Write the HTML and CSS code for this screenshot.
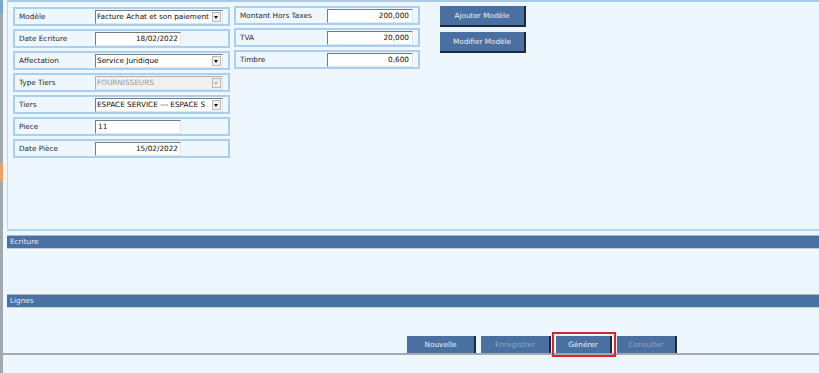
FILE: index.html
```html
<!DOCTYPE html>
<html>
<head>
    <title>Saisie Modèle</title>
    <link rel="stylesheet" href="styles.css">
</head>

<body>
    <div class="edge">
        <div class="edge-top"></div>
        <div class="edge-mark"></div>
    </div>

    <div class="page">
        <div class="panel">
            <div class="col col-left">
                <div class="field">
                    <span class="label">Modèle</span>
                    <div class="select">Facture Achat et son paiement<span class="arrow"></span></div>
                </div>
                <div class="field">
                    <span class="label">Date Ecriture</span>
                    <div class="input input-date">18/02/2022</div>
                </div>
                <div class="field">
                    <span class="label">Affectation</span>
                    <div class="select">Service Juridique<span class="arrow"></span></div>
                </div>
                <div class="field">
                    <span class="label">Type Tiers</span>
                    <div class="select disabled">FOURNISSEURS<span class="arrow"></span></div>
                </div>
                <div class="field">
                    <span class="label">Tiers</span>
                    <div class="select">ESPACE SERVICE --- ESPACE S<span class="arrow"></span></div>
                </div>
                <div class="field">
                    <span class="label">Piece</span>
                    <div class="input input-date left">11</div>
                </div>
                <div class="field">
                    <span class="label">Date Pièce</span>
                    <div class="input input-date">15/02/2022</div>
                </div>
            </div>

            <div class="col col-mid">
                <div class="field">
                    <span class="label">Montant Hors Taxes</span>
                    <div class="input input-num">200,000</div>
                </div>
                <div class="field">
                    <span class="label">TVA</span>
                    <div class="input input-num">20,000</div>
                </div>
                <div class="field">
                    <span class="label">Timbre</span>
                    <div class="input input-num">0,600</div>
                </div>
            </div>

            <div class="col col-actions">
                <button class="btn btn-model">Ajouter Modèle</button>
                <button class="btn btn-model">Modifier Modèle</button>
            </div>
        </div>

        <div class="section-bar">Ecriture</div>
        <div class="section-body"></div>
        <div class="section-bar">Lignes</div>

        <div class="toolbar">
            <button class="btn btn-bar btn-new">Nouvelle</button>
            <button class="btn btn-bar off btn-save">Enregistrer</button>
            <button class="btn btn-bar btn-gen">Générer</button>
            <button class="btn btn-bar off btn-view">Consulter</button>
        </div>
    </div>
</body>
</html>
```

FILE: styles.css
```css
html, body {
    margin: 0;
    height: 100%;
}

body {
    display: flex;
    background-color: #eef6fe;
    font-family: "DejaVu Sans", Verdana, sans-serif;
    font-size: 7.3px;
    color: #2a2a2a;
    overflow: hidden;
}

.edge {
    width: 3px;
    background-color: #a3a7ae;
    display: flex;
    flex-direction: column;
}

.edge-top {
    height: 15px;
    background-color: #7fa6d0;
}

.edge-mark {
    height: 19px;
    margin-top: 148px;
    background-color: #f0a060;
}

.page {
    flex: 1;
    display: flex;
    flex-direction: column;
}

/* top panel */
.panel {
    display: flex;
    align-items: flex-start;
    height: 222px;
    margin-left: 4px;
    padding: 5px 0 0 5px;
    border-top: 2px solid #a9c9ea;
    border-left: 1px solid #b3d8f8;
    border-bottom: 2px solid #b3d8f8;
}

.col {
    display: flex;
    flex-direction: column;
    gap: 3px;
}

.col-left {
    width: 217px;
}

.col-mid {
    width: 186px;
    margin-left: 4px;
    margin-top: -1px;
}

.col-actions {
    margin-left: 20px;
    margin-top: -1px;
    gap: 5px;
}

.field {
    box-sizing: border-box;
    height: 19px;
    display: flex;
    align-items: center;
    padding: 0 5px 0 4px;
    border: 2px solid #a9d0f3;
}

.label {
    flex: none;
    width: 76px;
}

.col-mid .label {
    width: 87px;
}

.input, .select {
    box-sizing: border-box;
    height: 14px;
    line-height: 12px;
    background-color: #fff;
    color: #111;
    border-top: 1px solid #7a7a7a;
    border-left: 1px solid #7a7a7a;
    border-right: 1px solid #e4e4e4;
    border-bottom: 1px solid #e4e4e4;
    white-space: nowrap;
    overflow: hidden;
}

.select {
    width: 129px;
    position: relative;
    padding-left: 1px;
}

.arrow {
    position: absolute;
    right: 1px;
    top: 1px;
    width: 9px;
    height: 10px;
    box-sizing: border-box;
    background-color: #f0f0f0;
    border: 1px solid #b8b8b8;
}

.arrow::after {
    content: "";
    position: absolute;
    left: 1px;
    top: 3px;
    border-left: 2.5px solid transparent;
    border-right: 2.5px solid transparent;
    border-top: 3px solid #111;
}

.select.disabled {
    background-color: #f0f0f0;
    color: #9a9a9a;
    border-top-color: #b0b0b0;
    border-left-color: #b0b0b0;
}

.select.disabled .arrow::after {
    border-top-color: #b0b0b0;
}

.input-date {
    width: 86px;
    text-align: right;
    padding-right: 2px;
}

.input-date.left {
    text-align: left;
    padding-left: 2px;
}

.input-num {
    width: 86px;
    text-align: right;
    padding-right: 3px;
}

/* buttons */
.btn {
    font-family: inherit;
    font-size: 7.3px;
    color: #e8eef6;
    background-color: #4a70a2;
    border: none;
    border-right: 2px solid #1c2a3f;
    border-bottom: 2px solid #1c2a3f;
    padding: 0;
    cursor: pointer;
}

.btn-model {
    width: 86px;
    height: 21px;
}

/* section headers */
.section-bar {
    height: 12px;
    line-height: 12px;
    margin-left: 4px;
    margin-top: 4px;
    padding-left: 3px;
    background-color: #4a71a3;
    border-top: 1px solid #aab4c0;
    border-bottom: 1px solid #c6ced8;
    color: #e4ebf3;
}

.section-body {
    height: 41px;
}

/* bottom toolbar */
.toolbar {
    display: flex;
    align-items: flex-end;
    gap: 5px;
    height: 45px;
    padding-left: 404px;
    border-bottom: 2px solid #a4a8b0;
}

.btn-bar {
    height: 17px;
    border-bottom: none;
}

.btn-new {
    width: 69px;
}

.btn-save {
    width: 70px;
}

.btn-gen {
    width: 56px;
    outline: 2px solid #e3212b;
    outline-offset: 2px;
}

.btn-view {
    width: 60px;
}

.btn.off {
    color: #8ea3bf;
}
```
